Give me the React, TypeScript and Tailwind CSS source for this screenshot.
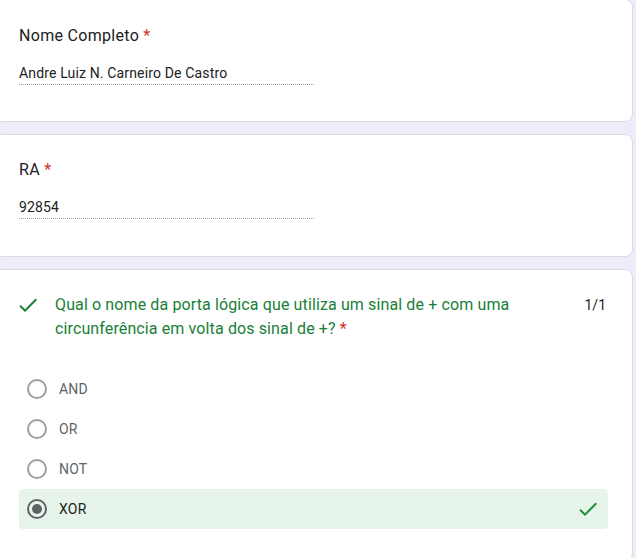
const OPTIONS = ["AND", "OR", "NOT", "XOR"];
const SELECTED = "XOR";

function CheckMark({ className }: { className?: string }) {
  return (
    <svg viewBox="0 0 24 24" className={className} fill="currentColor">
      <path d="M9 16.17L4.83 12l-1.42 1.41L9 19 21 7l-1.41-1.41z" />
    </svg>
  );
}

function TextCard({ label, value, first }: { label: string; value: string; first?: boolean }) {
  return (
    <div
      className={
        first
          ? "ml-[-6px] w-[639px] rounded-lg border border-[#dadce0] bg-white pl-[24px] pt-[24px] pb-[36px]"
          : "ml-[-6px] w-[639px] rounded-lg border border-[#dadce0] bg-white pl-[24px] pt-[23px] pb-[37px]"
      }
    >
      <div className="h-6 text-[16px] leading-6 tracking-[0.3px] text-[#202124]">
        {label} <span className="text-[#d93025]">*</span>
      </div>
      <div className="mt-[15px] w-[295px] border-b border-dotted border-[#9e9e9e] text-[14px] leading-[21px] tracking-[0.15px] text-[#202124]">
        {value}
      </div>
    </div>
  );
}

export default function App() {
  return (
    <div className="h-[558px] w-[636px] overflow-hidden bg-[#f0ebf8] font-['Roboto',sans-serif]">
      <div className="mt-[-1px] flex flex-col gap-3">
        <TextCard first label="Nome Completo" value="Andre Luiz N. Carneiro De Castro" />
        <TextCard label="RA" value="92854" />

        <div className="ml-[-6px] w-[639px] rounded-lg border border-[#dadce0] bg-white pl-[24px] pr-[24px] pt-[23px] pb-8">
          <div className="flex items-start">
            <CheckMark className="ml-[-3px] mr-[15px] h-6 w-6 shrink-0 text-[#188038]" />
            <div className="flex-1 text-[16px] leading-6 tracking-[0.12px] text-[#188038]">
              Qual o nome da porta lógica que utiliza um sinal de + com uma
              <br />
              circunferência em volta dos sinal de +? <span className="text-[#d93025]">*</span>
            </div>
            <div className="pr-[2px] text-[14px] leading-6 text-[#202124]">1/1</div>
          </div>

          <div className="mt-7 flex flex-col">
            {OPTIONS.map((opt) => {
              const sel = opt === SELECTED;
              return (
                <div
                  key={opt}
                  className={
                    sel
                      ? "flex h-10 items-center rounded bg-[#e6f4ea] pl-2 pr-2"
                      : "flex h-10 items-center pl-2 pr-2"
                  }
                >
                  {sel ? (
                    <span className="flex h-5 w-5 items-center justify-center rounded-full border-2 border-[#5f6368]">
                      <span className="h-[10px] w-[10px] rounded-full bg-[#5f6368]" />
                    </span>
                  ) : (
                    <span className="h-5 w-5 rounded-full border-2 border-[#9aa0a6]" />
                  )}
                  <span
                    className={
                      sel
                        ? "ml-3 flex-1 text-[14px] tracking-[0.2px] text-[#202124]"
                        : "ml-3 flex-1 text-[14px] tracking-[0.2px] text-[#5f6368]"
                    }
                  >
                    {opt}
                  </span>
                  {sel && <CheckMark className="h-6 w-6 text-[#1e8e3e]" />}
                </div>
              );
            })}
          </div>
        </div>
      </div>
    </div>
  );
}
